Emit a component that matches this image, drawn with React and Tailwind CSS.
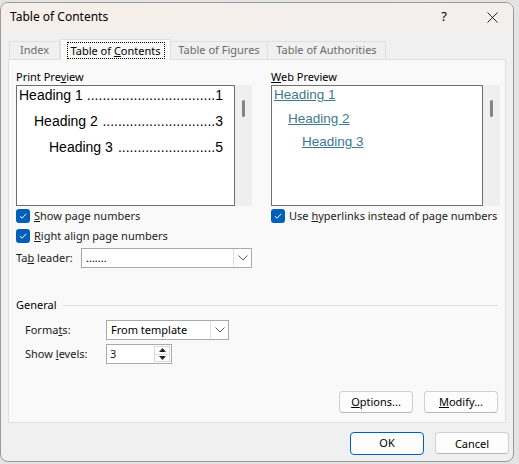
const FONT = { fontFamily: '"Segoe UI", "Noto Sans", sans-serif' };

const Check = () => (
  <span className="w-[14px] h-[14px] rounded-[3px] bg-[#005fb8] flex items-center justify-center shrink-0">
    <svg width="10" height="10" viewBox="0 0 10 10">
      <path d="M2 5.2 L4.1 7.2 L8.2 2.8" fill="none" stroke="#fff" strokeWidth="1" />
    </svg>
  </span>
);

const Chevron = () => (
  <svg width="10" height="6" viewBox="0 0 10 6">
    <path d="M0.5 0.5 L5 5 L9.5 0.5" fill="none" stroke="#5a5a5a" strokeWidth="1" />
  </svg>
);

const Select = ({ value, width }) => (
  <div className={`${width} h-[20px] bg-white border border-[#a9a9a9] flex items-stretch`}>
    <span className="flex-1 pl-[4px] flex items-center text-[#000]">{value}</span>
    <span className="w-[18px] border-l border-[#e3e3e3] flex items-center justify-center">
      <Chevron />
    </span>
  </div>
);

const Scrollbar = () => (
  <div className="w-[17px] bg-[#efefef] flex justify-center pt-[15px]">
    <div className="w-[3px] h-[17px] rounded-full bg-[#858585]" />
  </div>
);

// leader dots counted to fit the preview width
const Leader = ({ label, num, dots, indent }) => (
  <div className={`flex items-center ${indent}`}>
    <span className="whitespace-nowrap">{label}</span>
    <span className="flex-1 whitespace-nowrap text-right">{".".repeat(dots)}</span>
    <span>{num}</span>
  </div>
);

const CheckRow = ({ children }) => (
  <div className="flex items-center gap-[4px] h-[14px] whitespace-nowrap">
    <Check />
    <span>{children}</span>
  </div>
);

const Button = ({ children, primary }) => (
  <button
    className={`w-[74px] rounded-[4px] bg-[#fdfdfd] text-black ${
      primary ? "h-[23px] border border-[#005fb8]" : "h-[22px] border border-[#d0d0d0] border-b-[#b8b8b8]"
    }`}
  >
    {children}
  </button>
);

export default function App() {
  const previewFont = { fontFamily: '"Liberation Sans", Arial, sans-serif' };
  return (
    <div className="w-[519px] h-[464px] bg-[#e4e4e4] pt-[2px] overflow-hidden text-[11px] text-[#1a1a1a]" style={FONT}>
      <div className="w-[514px] h-[460px] rounded-[8px] border border-[#9a9a9a] bg-[#f0f0f0] flex flex-col overflow-hidden">
        {/* title bar */}
        <div className="h-[28px] shrink-0 flex items-center pl-[9px] bg-gradient-to-r from-[#f6eee8] to-[#f2f0ef]">
          <span className="text-[12px] text-black">Table of Contents</span>
          <span className="ml-auto text-[13px] text-black mr-[40px]">?</span>
          <span className="mr-[15px] flex items-center">
            <svg width="11" height="11" viewBox="0 0 11 11">
              <path d="M0.5 0.5 L10.5 10.5 M10.5 0.5 L0.5 10.5" stroke="#222" strokeWidth="1" />
            </svg>
          </span>
        </div>

        {/* tabs */}
        <div className="mt-[8px] h-[20px] flex items-end pl-[8px] relative z-10">
          <div className="w-[51px] h-[18px] border border-b-0 border-[#e0e0e0] bg-[#f0f0f0] flex items-center justify-center text-[#6b6b6b]">
            Index
          </div>
          <div className="w-[111px] h-[21px] -mb-px border border-b-0 border-[#e0e0e0] bg-[#f9f9f9] flex items-center justify-center">
            <span className="border border-dotted border-black px-[3px] leading-[15px] text-black">
              Table of <span className="underline">C</span>ontents
            </span>
          </div>
          <div className="w-[97px] h-[18px] border border-b-0 border-l-0 border-[#e0e0e0] bg-[#f0f0f0] flex items-center justify-center text-[#6b6b6b]">
            Table of Figures
          </div>
          <div className="w-[118px] h-[18px] border border-b-0 border-l-0 border-[#e0e0e0] bg-[#f0f0f0] flex items-center justify-center text-[#6b6b6b]">
            Table of Authorities
          </div>
        </div>

        {/* panel */}
        <div className="mx-[7px] h-[364px] shrink-0 border border-[#e0e0e0] bg-[#f9f9f9] flex flex-col pl-[7px] pr-[7px] pt-[9px] pb-[9px]">
          <div className="h-[226px] flex">
            {/* left column */}
            <div className="w-[236px] flex flex-col">
              <div className="h-[16px] leading-[16px] text-black">
                Print Pre<span className="underline">v</span>iew
              </div>
              <div className="h-[121px] flex">
                <div
                  className="w-[219px] bg-white border border-[#6e6e6e] flex flex-col gap-[8px] pl-[2px] pr-[11px] text-[14px] leading-[18px] text-black"
                  style={previewFont}
                >
                  <Leader label="Heading 1" num="1" dots={33} indent="" />
                  <Leader label="Heading 2" num="3" dots={29} indent="pl-[15px]" />
                  <Leader label="Heading 3" num="5" dots={25} indent="pl-[30px]" />
                </div>
                <Scrollbar />
              </div>
              <div className="mt-[3px]">
                <CheckRow>
                  <span className="underline">S</span>how page numbers
                </CheckRow>
              </div>
              <div className="mt-[6px]">
                <CheckRow>
                  <span className="underline">R</span>ight align page numbers
                </CheckRow>
              </div>
              <div className="mt-[5px] flex items-center">
                <span className="w-[65px]">
                  Ta<span className="underline">b</span> leader:
                </span>
                <Select value="......." width="w-[171px]" />
              </div>
            </div>

            {/* separator */}
            <div className="ml-[9px] w-px bg-[#a6a6a6]" />

            {/* right column */}
            <div className="ml-[10px] w-[229px] flex flex-col">
              <div className="h-[16px] leading-[16px] text-black">
                <span className="underline">W</span>eb Preview
              </div>
              <div className="h-[121px] flex">
                <div
                  className="w-[212px] bg-white border border-[#6e6e6e] flex flex-col gap-[5.5px] pl-[2px] text-[13.5px] leading-[18px] text-[#3d7a8f]"
                  style={previewFont}
                >
                  <span className="underline">Heading 1</span>
                  <span className="underline pl-[14px]">Heading 2</span>
                  <span className="underline pl-[28px]">Heading 3</span>
                </div>
                <Scrollbar />
              </div>
              <div className="mt-[3px]">
                <CheckRow>
                  Use <span className="underline">h</span>yperlinks instead of page numbers
                </CheckRow>
              </div>
            </div>
          </div>

          {/* General */}
          <div className="mt-[2px] h-[16px] flex items-center gap-[6px]">
            <span className="text-black">General</span>
            <span className="flex-1 h-px bg-[#dcdcdc]" />
          </div>
          <div className="mt-[7px] pl-[9px] flex items-center">
            <span className="w-[81px]">
              Forma<span className="underline">t</span>s:
            </span>
            <Select value="From template" width="w-[123px]" />
          </div>
          <div className="mt-[4px] pl-[9px] flex items-center">
            <span className="w-[81px]">
              Show <span className="underline">l</span>evels:
            </span>
            <div className="w-[66px] h-[20px] bg-white border border-[#a9a9a9] flex">
              <span className="flex-1 pl-[3px] flex items-center">3</span>
              <span className="w-[16px] my-[1px] mr-[1px] border border-[#d9d9d9] flex flex-col">
                <span className="flex-1 flex items-center justify-center border-b border-[#d9d9d9]">
                  <svg width="7" height="4" viewBox="0 0 7 4"><path d="M3.5 0 L7 4 L0 4 Z" fill="#222" /></svg>
                </span>
                <span className="flex-1 flex items-center justify-center">
                  <svg width="7" height="4" viewBox="0 0 7 4"><path d="M0 0 L7 0 L3.5 4 Z" fill="#222" /></svg>
                </span>
              </span>
            </div>
          </div>

          <div className="mt-auto flex justify-end gap-[11px]">
            <Button>
              <span className="underline">O</span>ptions...
            </Button>
            <Button>
              <span className="underline">M</span>odify...
            </Button>
          </div>
        </div>

        {/* bottom */}
        <div className="mt-[9px] flex justify-end gap-[11px] pr-[4px]">
          <Button primary>OK</Button>
          <Button primary={false}>
            <span className="block leading-[21px]">Cancel</span>
          </Button>
        </div>
      </div>
    </div>
  );
}
